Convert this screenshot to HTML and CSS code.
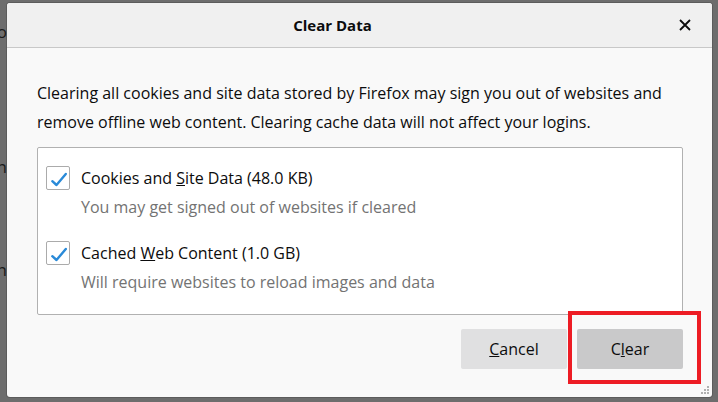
FILE: index.html
```html
<!DOCTYPE html>
<html>
<head>
<meta charset="utf-8">
<link rel="stylesheet" href="styles.css">
</head>
<body>
<div class="backdrop">
  <span class="frag frag-1">Info</span>
  <span class="frag frag-2">Open</span>
  <span class="frag frag-3">Bin</span>
  <span class="frag frag-4">Firefox information and data</span>
</div>
<div class="dialog">
  <header class="dialog-header">
    <h1 class="title">Clear Data</h1>
    <button class="close" aria-label="Close">
      <svg width="12" height="12" viewBox="0 0 12 12"><path d="M1 1 L11 11 M11 1 L1 11" stroke="#0c0c0d" stroke-width="1.8" fill="none"/></svg>
    </button>
  </header>
  <div class="dialog-body">
    <p class="intro">Clearing all cookies and site data stored by Firefox may sign you out of websites and remove offline web content. Clearing cache data will not affect your logins.</p>
    <div class="options">
      <div class="option">
        <div class="option-row">
          <span class="checkbox"><svg width="24" height="24" viewBox="0 0 24 24"><path d="M6.3 15.2 L10.5 19 L19.8 8" stroke="#2a8ad8" stroke-width="2.4" fill="none" stroke-linecap="round" stroke-linejoin="round"/></svg></span>
          <span class="label">Cookies and <u>S</u>ite Data (48.0 KB)</span>
        </div>
        <div class="desc">You may get signed out of websites if cleared</div>
      </div>
      <div class="option">
        <div class="option-row">
          <span class="checkbox"><svg width="24" height="24" viewBox="0 0 24 24"><path d="M6.3 15.2 L10.5 19 L19.8 8" stroke="#2a8ad8" stroke-width="2.4" fill="none" stroke-linecap="round" stroke-linejoin="round"/></svg></span>
          <span class="label">Cached <u>W</u>eb Content (1.0 GB)</span>
        </div>
        <div class="desc">Will require websites to reload images and data</div>
      </div>
    </div>
    <div class="actions">
      <button class="btn btn-cancel"><u>C</u>ancel</button>
      <span class="highlight"><button class="btn btn-clear">C<u>l</u>ear</button></span>
    </div>
  </div>
  <svg class="grip" width="10" height="10" viewBox="0 0 10 10">
    <rect x="7" y="1" width="2" height="2" fill="#b0b0b0"/>
    <rect x="4" y="4" width="2" height="2" fill="#b0b0b0"/>
    <rect x="7" y="4" width="2" height="2" fill="#b0b0b0"/>
    <rect x="1" y="7" width="2" height="2" fill="#b0b0b0"/>
    <rect x="4" y="7" width="2" height="2" fill="#b0b0b0"/>
    <rect x="7" y="7" width="2" height="2" fill="#b0b0b0"/>
  </svg>
</div>
</body>
</html>
```

FILE: styles.css
```css
* { box-sizing: border-box; }
html, body {
  margin: 0;
  padding: 0;
  width: 718px;
  height: 402px;
  overflow: hidden;
}
body {
  background: #6d6d6d;
  font-family: "Open Sans", "Noto Sans", sans-serif;
  color: #0c0c0d;
  position: relative;
  padding: 3px 6px 0 7px;
}
.backdrop {
  position: absolute;
  inset: 0;
  z-index: 0;
}
.frag {
  position: absolute;
  font-size: 17px;
  color: #1a1a1a;
  white-space: nowrap;
}
.frag-1 { right: 711px; top: 20px; }
.frag-2 { right: 711px; top: 155px; }
.frag-3 { right: 711px; top: 258px; }
.frag-4 { left: 40px; top: 397px; }
.dialog {
  position: relative;
  z-index: 1;
  width: 705px;
  height: 394px;
  background: #f9f9f9;
  border-radius: 3px;
  box-shadow: 0 0 0 1px rgba(0,0,0,0.15);
  overflow: hidden;
}
.dialog-header {
  height: 45px;
  background: #f0f0f0;
  border-bottom: 1px solid #c8c8c8;
  display: flex;
  align-items: center;
}
.title {
  flex: 1;
  margin: 0;
  text-align: center;
  font-size: 15px;
  font-weight: 700;
  padding-bottom: 1px;
}
.close {
  flex: none;
  width: 54px;
  height: 12px;
  margin: 0;
  border: 0;
  background: transparent;
  padding: 0 21px 0 21px;
  display: flex;
}
.dialog-body {
  padding: 31px 29px 0 30px;
}
.intro {
  margin: 0;
  font-size: 16px;
  line-height: 29px;
  color: #0c0c0d;
}
.options {
  margin-top: 10px;
  background: #fff;
  border: 1px solid #b1b1b1;
  border-radius: 2px;
  padding: 17px 8px 18px;
  display: flex;
  flex-direction: column;
  gap: 19px;
}
.option-row {
  display: flex;
  align-items: center;
  gap: 11px;
}
.checkbox {
  width: 24px;
  height: 24px;
  border: 1px solid #ababab;
  border-radius: 2px;
  background: #fff;
  position: relative;
  flex: none;
}
.checkbox svg {
  position: absolute;
  left: -1px;
  top: -1px;
}
.label {
  font-size: 16px;
  line-height: 24px;
  padding-top: 1px;
}
.desc {
  margin-top: 3px;
  margin-left: 35px;
  font-size: 16px;
  line-height: 28px;
  color: #737373;
}
.actions {
  margin-top: 14px;
  display: flex;
  justify-content: flex-end;
  gap: 10px;
}
.btn {
  width: 106px;
  height: 40px;
  border: 0;
  border-radius: 2px;
  font-family: inherit;
  font-size: 16px;
  color: #0c0c0d;
  padding: 0;
}
.btn-cancel { background: #e0e0e1; }
.btn-clear { background: #c9c9ca; }
.highlight {
  position: relative;
  display: flex;
}
.highlight::after {
  content: "";
  position: absolute;
  left: -9px;
  top: -18px;
  right: -18px;
  bottom: -15px;
  border: 4px solid #ed1c24;
}
.grip {
  position: absolute;
  right: 2px;
  bottom: 2px;
}
```
